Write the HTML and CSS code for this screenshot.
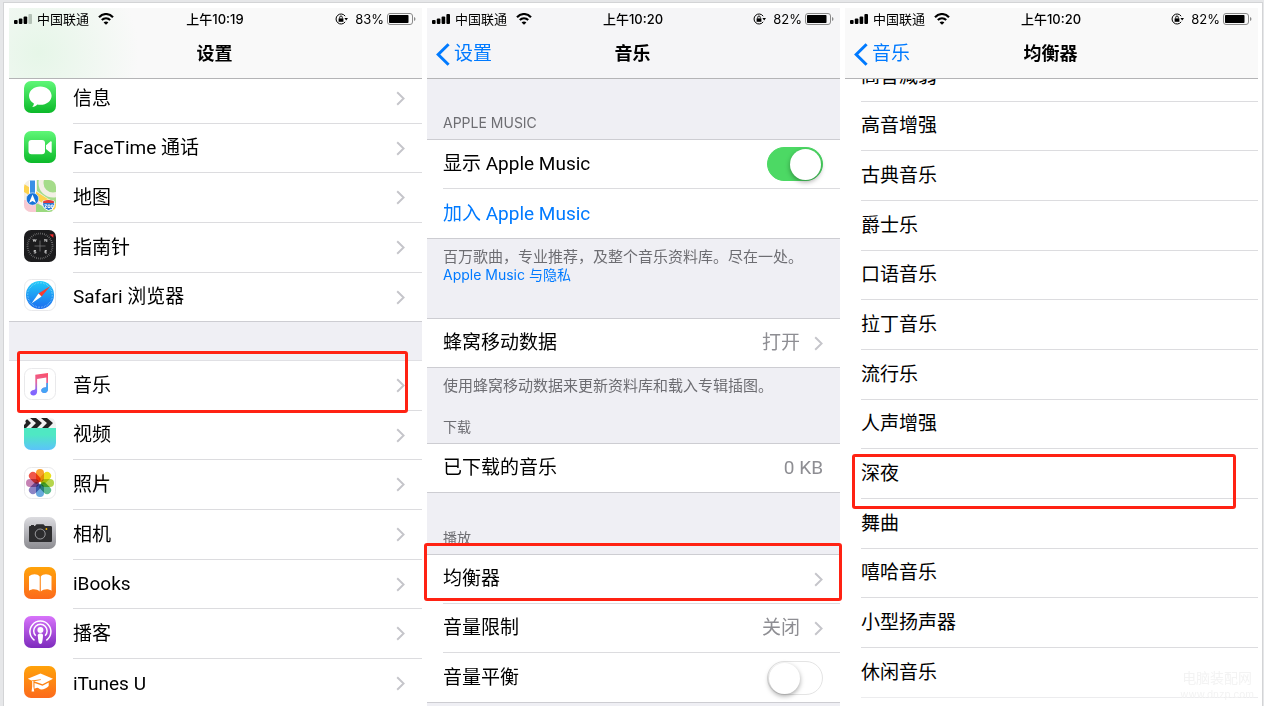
FILE: index.html
```html
<!DOCTYPE html>
<html lang="zh-CN">

<head>
    <meta charset="UTF-8">
    <meta name="viewport" content="width=device-width, initial-scale=1.0">
    <title>设置 - 音乐 - 均衡器</title>
    <link rel="stylesheet" href="styles.css">
</head>

<body>
    <!-- Shared icons -->
    <svg class="sprite" width="0" height="0" aria-hidden="true">
        <defs>
            <linearGradient id="green" x1="0" y1="0" x2="0" y2="1"><stop offset="0" stop-color="#5ff777"/><stop offset="1" stop-color="#0bb929"/></linearGradient>
            <linearGradient id="orange" x1="0" y1="0" x2="0" y2="1"><stop offset="0" stop-color="#ffa30a"/><stop offset="1" stop-color="#fc6a1c"/></linearGradient>
            <linearGradient id="purple" x1="0" y1="0" x2="0" y2="1"><stop offset="0" stop-color="#d873fb"/><stop offset="1" stop-color="#7d2bbd"/></linearGradient>
            <linearGradient id="blue" x1="0" y1="0" x2="0" y2="1"><stop offset="0" stop-color="#1fcbf8"/><stop offset="1" stop-color="#1d6cf0"/></linearGradient>
            <linearGradient id="aqua" x1="0" y1="0" x2="0" y2="1"><stop offset="0.3" stop-color="#4fe8c3"/><stop offset="1" stop-color="#5bc3fa"/></linearGradient>
            <linearGradient id="silver" x1="0" y1="0" x2="0" y2="1"><stop offset="0" stop-color="#dcdce0"/><stop offset="1" stop-color="#8b8b90"/></linearGradient>
            <linearGradient id="note" x1="0.7" y1="0" x2="0.5" y2="1"><stop offset="0" stop-color="#fb4f6b"/><stop offset="0.45" stop-color="#e5679c"/><stop offset="0.8" stop-color="#8a6bfa"/><stop offset="1" stop-color="#7f63ff"/></linearGradient>
            <clipPath id="tile"><rect width="32" height="32" rx="7"/></clipPath>
        </defs>
        <symbol id="chevron" viewBox="0 0 9 15"><path d="M1.2 1.2 7.6 7.5 1.2 13.8" fill="none" stroke="#c5c5ca" stroke-width="1.9"/></symbol>
        <symbol id="back" viewBox="0 0 14 23"><path d="M12.6 1.2 2.2 11.5 12.6 21.8" fill="none" stroke="#007aff" stroke-width="3"/></symbol>
        <symbol id="signal" viewBox="0 0 18 10"><rect y="6" width="3.6" height="4" rx="1"/><rect x="4.8" y="4.4" width="3.6" height="5.6" rx="1"/><rect x="9.6" y="2.4" width="3.6" height="7.6" rx="1"/></symbol>
        <symbol id="wifi" viewBox="0 0 16 12"><g fill="none" stroke="#000" stroke-width="2.1"><path d="M1 4.3C5-.1 11-.1 15 4.3"/><path d="M3.8 7.1c2.4-2.5 6-2.5 8.4 0"/></g><path d="M8 11.8 5.6 9.4c1.3-1.3 3.5-1.3 4.8 0z"/></symbol>
        <symbol id="lock" viewBox="0 0 13 12"><path d="M10.2 3.2A5 5 0 1 0 10.2 8.8" fill="none" stroke="#000"/><path d="M9.4 5h3.6l-1.8 2.600z"/><path d="M3.6 5.400h4.800v3.400H3.6z"/><path d="M4.700 5.600V4.300a1.300 1.300 0 0 1 2.600 0v1.300" fill="none" stroke="#000" stroke-width="0.9"/></symbol>
        <symbol id="battery" viewBox="0 0 29 12"><rect x="0.5" y="0.5" width="25" height="11" rx="2.5" fill="none" stroke="#8a8a8a"/><rect x="2" y="2" width="19.5" height="8" rx="0.8"/><path d="M27 4v4c2-.8 2-3.200 0-4z" fill="#8a8a8a"/></symbol>
    </svg>

    <main class="frame">
        <!-- Settings -->
        <section class="phone">
            <header class="top top-settings">
                <div class="status">
                    <div class="status-left">
                        <svg class="signal" width="18" height="10"><use href="#signal"/><rect x="14.400" width="3.600" height="10" rx="1" fill="#b5c2b7"/></svg>
                        <span class="carrier">中国联通</span>
                        <svg width="16" height="12"><use href="#wifi"/></svg>
                    </div>
                    <time class="clock">上午10:19</time>
                    <div class="status-right">
                        <svg class="lock" width="13" height="12"><use href="#lock"/></svg>
                        <span>83%</span>
                        <svg width="29" height="12"><use href="#battery"/></svg>
                    </div>
                </div>
                <div class="nav">
                    <span></span>
                    <h1>设置</h1>
                </div>
            </header>
            <div class="screen">
                <div class="scroll scroll-settings">
                    <div class="list icons">
                        <a class="row" href="#">
                            <svg class="app" width="32" height="32" viewBox="0 0 32 32"><rect width="32" height="32" rx="7" fill="url(#green)"/><path d="M16.300 5.400C10 5.400 5 9.500 5 14.700c0 3.200 1.900 6 4.900 7.700-.1 1.400-.8 2.500-1.700 3.500 2.100 0 3.800-.8 5.100-2.300 8 1.400 14.300-3.100 14.300-8.900 0-5.200-5-9.300-11.300-9.300z" fill="#fff"/></svg>
                            <span class="cell">信息 <svg class="chevron"><use href="#chevron"/></svg></span>
                        </a>
                        <a class="row" href="#">
                            <svg class="app" width="32" height="32" viewBox="0 0 32 32"><rect width="32" height="32" rx="7" fill="url(#green)"/><rect x="4.500" y="9" width="16.500" height="14.200" rx="3" fill="#fff"/><path d="M22 14.200 26.300 10.600c.7-.5 1.400-.3 1.400.6v9.800c0 .9-.7 1.100-1.400.6L22 18z" fill="#fff"/></svg>
                            <span class="cell">FaceTime 通话 <svg class="chevron"><use href="#chevron"/></svg></span>
                        </a>
                        <a class="row" href="#">
                            <svg class="app" width="32" height="32" viewBox="0 0 32 32">
                                <g clip-path="url(#tile)">
                                    <rect width="32" height="32" fill="#f3efe6"/>
                                    <path d="M13 0h19v24L13 11z" fill="#a5dc8a"/>
                                    <circle cx="29" cy="3" r="12" fill="none" stroke="#f3efe6" stroke-width="5"/>
                                    <path d="M0 20h14l4 12H0z" fill="#f8c9d2"/>
                                    <path d="M12 23 32 32H12z" fill="#9ad97f"/>
                                    <path d="M0 4 32 24v7L0 12z" fill="#fdd34e"/>
                                    <path d="M5.500 0h6v20h-6z" fill="#3a90e6" stroke="#fff"/>
                                    <circle cx="8.500" cy="19" r="6.200" fill="#1673d9" stroke="#fff" stroke-width="0.600"/>
                                    <path d="M8.500 14.500 12 23l-3.500-2L5 23z" fill="#fff"/>
                                    <path d="M19 21q5-2 11 0 2 8-5.500 9.500Q17 28 19 21z" fill="#2778d4" stroke="#fff"/>
                                    <path d="M19.400 21q5-2 10.300 0l.2 2H19.200z" fill="#e23b3b"/>
                                    <path d="M20.500 24.800h2.300l-2 2.600h2M24 25h2v2.500h-2zM27.300 25h1.800v2.500h-1.800z" fill="none" stroke="#fff" stroke-width="0.900"/>
                                </g>
                            </svg>
                            <span class="cell">地图 <svg class="chevron"><use href="#chevron"/></svg></span>
                        </a>
                        <a class="row" href="#">
                            <svg class="app" width="32" height="32" viewBox="0 0 32 32"><rect width="32" height="32" rx="7" fill="#1c1c1e"/><circle cx="16" cy="16" r="12.500" fill="none" stroke="#9a9a9a" stroke-width="1.800" stroke-dasharray="0.500 1.400"/><path d="M16 10.500v11M10.500 16h11" stroke="#777" stroke-width="0.800"/><path d="m25.500 4.500 4-.2-.2 3.500z" fill="#fa2d2d"/><g fill="none" stroke="#ddd" stroke-width="0.800"><path d="m9 9 .8 2.500.8-2 .8 2 .8-2.500M20.800 11.700V9l2 2.700V9M12 20.500h-2v1.200h1.800V23h-2M22.800 20.500H21V23h1.900M21 21.700h1.600"/></g></svg>
                            <span class="cell">指南针 <svg class="chevron"><use href="#chevron"/></svg></span>
                        </a>
                        <a class="row" href="#">
                            <svg class="app" width="32" height="32" viewBox="0 0 32 32"><rect x="0.500" y="0.500" width="31" height="31" rx="7" fill="#fff" stroke="#e9e9eb"/><circle cx="16" cy="16" r="14" fill="url(#blue)"/><circle cx="16" cy="16" r="12.300" fill="none" stroke="#a9dcfb" stroke-width="1.400" stroke-dasharray="0.400 1.200"/><path d="m26.500 7-12 7.500 3 3z" fill="#fb3b30"/><path d="m7.500 24.500 7-10 3 3z" fill="#fff"/></svg>
                            <span class="cell">Safari 浏览器 <svg class="chevron"><use href="#chevron"/></svg></span>
                        </a>
                    </div>
                    <div class="list icons spaced">
                        <a class="row" href="#">
                            <svg class="app" width="32" height="32" viewBox="0 0 32 32"><rect x="0.500" y="0.500" width="31" height="31" rx="7" fill="#fff" stroke="#e9e9eb"/><path d="M11.300 6.800 24 5v16.300c0 2.200-1.600 3.700-3.700 3.700-1.800 0-3-1-3-2.500 0-1.800 1.500-2.600 3.300-2.900 1.200-.2 1.700-.5 1.700-1.300V9.600l-9.200 1.500v12.600c0 2.200-1.700 3.700-3.700 3.700-1.900 0-3.100-1-3.100-2.600 0-1.800 1.600-2.600 3.300-2.900 1.100-.2 1.700-.5 1.700-1.300z" fill="url(#note)"/><path d="M24 15v6.300c0 2.200-1.600 3.700-3.700 3.700-1.800 0-3-1-3-2.500 0-1.800 1.500-2.600 3.300-2.900 1.200-.2 1.700-.5 1.700-1.300V15z" fill="#44a5f5"/></svg>
                            <span class="cell">音乐 <svg class="chevron"><use href="#chevron"/></svg></span>
                        </a>
                        <a class="row" href="#">
                            <svg class="app" width="32" height="32" viewBox="0 0 32 32">
                                <path d="M0 10h32v15a7 7 0 0 1-7 7H7a7 7 0 0 1-7-7z" fill="url(#aqua)"/>
                                <g clip-path="url(#tile)">
                                    <path d="M0 0h32v10H0z" fill="#f2f2f2"/>
                                    <path d="M0 0h2l5 5-5 5H-3l5-5zM6 0h6l6 5-5 5H7l5-5zM17 0h6l6 5-5 5h-6l5-5zM28 0h4v3z" fill="#222"/>
                                </g>
                            </svg>
                            <span class="cell">视频 <svg class="chevron"><use href="#chevron"/></svg></span>
                        </a>
                        <a class="row" href="#">
                            <svg class="app" width="32" height="32" viewBox="0 0 32 32">
                                <rect x="0.500" y="0.500" width="31" height="31" rx="7" fill="#fff" stroke="#e9e9eb"/>
                                <g class="petals">
                                    <rect x="12" y="2" width="8" height="13" rx="4" fill="#f9a12e"/>
                                    <rect x="12" y="2" width="8" height="13" rx="4" fill="#ebdf1e" transform="rotate(45 16 16)"/>
                                    <rect x="12" y="2" width="8" height="13" rx="4" fill="#b5d54c" transform="rotate(90 16 16)"/>
                                    <rect x="12" y="2" width="8" height="13" rx="4" fill="#5fbc90" transform="rotate(135 16 16)"/>
                                    <rect x="12" y="2" width="8" height="13" rx="4" fill="#6aa9dd" transform="rotate(180 16 16)"/>
                                    <rect x="12" y="2" width="8" height="13" rx="4" fill="#8c84c4" transform="rotate(225 16 16)"/>
                                    <rect x="12" y="2" width="8" height="13" rx="4" fill="#c581b3" transform="rotate(270 16 16)"/>
                                    <rect x="12" y="2" width="8" height="13" rx="4" fill="#f0564a" transform="rotate(315 16 16)"/>
                                </g>
                            </svg>
                            <span class="cell">照片 <svg class="chevron"><use href="#chevron"/></svg></span>
                        </a>
                        <a class="row" href="#">
                            <svg class="app" width="32" height="32" viewBox="0 0 32 32"><rect width="32" height="32" rx="7" fill="url(#silver)"/><path d="M6 9h5l1.500-1.800h7L21 9h5.500c1 0 1.500.5 1.500 1.500v13c0 1-.5 1.500-1.500 1.500h-20C5.500 25 5 24.500 5 23.500v-13C5 9.500 5.300 9 6 9z" fill="#2d2d2f"/><path d="M7 8h3v1H7z" fill="#2d2d2f"/><circle cx="16.200" cy="17" r="5" fill="none" stroke="#a5a5a8" stroke-width="0.900"/><circle cx="22.400" cy="12" r="0.900" fill="#fcb900"/></svg>
                            <span class="cell">相机 <svg class="chevron"><use href="#chevron"/></svg></span>
                        </a>
                        <a class="row" href="#">
                            <svg class="app" width="32" height="32" viewBox="0 0 32 32"><rect width="32" height="32" rx="7" fill="url(#orange)"/><path d="M15.700 9.500C13.500 6.500 8 6.500 5 9.300v14.500c3-2.200 8-2 10.700.8zM16.800 9.500c2.200-3 7.700-3 10.700-.2v14.500c-3-2.200-8-2-10.700.8z" fill="#fff"/></svg>
                            <span class="cell">iBooks <svg class="chevron"><use href="#chevron"/></svg></span>
                        </a>
                        <a class="row" href="#">
                            <svg class="app" width="32" height="32" viewBox="0 0 32 32"><rect width="32" height="32" rx="7" fill="url(#purple)"/><g fill="none" stroke="#fff" stroke-width="1.500"><path d="M10.500 24.300a10.500 10.500 0 1 1 11.800 0"/><path d="M11.700 19.800a6.700 6.700 0 1 1 9.400 0"/></g><circle cx="16.400" cy="14" r="3" fill="#fff"/><path d="M13.800 19.300c0-1.300 1.200-1.800 2.600-1.800s2.600.5 2.600 1.800c0 2-.4 5-.9 7.300-.3 1-.9 1.400-1.700 1.400s-1.400-.4-1.700-1.400c-.5-2.300-.9-5.300-.9-7.300z" fill="#fff"/></svg>
                            <span class="cell">播客 <svg class="chevron"><use href="#chevron"/></svg></span>
                        </a>
                        <a class="row" href="#">
                            <svg class="app" width="32" height="32" viewBox="0 0 32 32"><rect width="32" height="32" rx="7" fill="url(#orange)"/><path d="m16.500 7.500 12.500 5.300-10.500 5.500-8.500-3 7-1.300-.3-.7-9.200 1.300-3.700-1.800z" fill="#fff"/><path d="m10.500 17 8 2.800 6.200-3.300v3.400c-3 3.400-8 4.400-9.700 2.600-1.200-1.200-2.500-.6-4.500.2z" fill="#fff"/><path d="M8.200 15h1.200v5.500l.8 5H7.600l.6-5z" fill="#fff"/></svg>
                            <span class="cell">iTunes U <svg class="chevron"><use href="#chevron"/></svg></span>
                        </a>
                    </div>
                </div>
            </div>
            <div class="mark mark-music"></div>
        </section>

        <!-- Music -->
        <section class="phone">
            <header class="top top-music">
                <div class="status">
                    <div class="status-left">
                        <svg class="signal" width="18" height="10"><use href="#signal"/><rect x="14.400" width="3.600" height="10" rx="1"/></svg>
                        <span class="carrier">中国联通</span>
                        <svg width="16" height="12"><use href="#wifi"/></svg>
                    </div>
                    <time class="clock">上午10:20</time>
                    <div class="status-right">
                        <svg class="lock" width="13" height="12"><use href="#lock"/></svg>
                        <span>82%</span>
                        <svg width="29" height="12"><use href="#battery"/></svg>
                    </div>
                </div>
                <div class="nav">
                    <a class="back" href="#"><svg width="14" height="23"><use href="#back"/></svg>设置</a>
                    <h1>音乐</h1>
                </div>
            </header>
            <div class="screen">
                <h2 class="label">APPLE MUSIC</h2>
                <div class="list compact">
                    <div class="row">
                        <div class="cell">
                            <label for="show-music">显示 Apple Music</label>
                            <input class="switch" type="checkbox" id="show-music" checked>
                        </div>
                    </div>
                    <a class="row join" href="#"><span class="cell">加入 Apple Music</span></a>
                </div>
                <p class="footnote">百万歌曲，专业推荐，及整个音乐资料库。尽在一处。<br><a href="#">Apple Music 与隐私</a></p>
                <div class="list compact single">
                    <a class="row" href="#"><span class="cell">蜂窝移动数据 <span class="value">打开</span><svg class="chevron"><use href="#chevron"/></svg></span></a>
                </div>
                <p class="footnote">使用蜂窝移动数据来更新资料库和载入专辑插图。</p>
                <h2 class="label">下载</h2>
                <div class="list compact">
                    <div class="row"><span class="cell">已下载的音乐 <span class="value">0 KB</span></span></div>
                </div>
                <h2 class="label">播放</h2>
                <div class="list compact">
                    <a class="row" href="#"><span class="cell">均衡器 <svg class="chevron"><use href="#chevron"/></svg></span></a>
                    <a class="row" href="#"><span class="cell">音量限制 <span class="value">关闭</span><svg class="chevron"><use href="#chevron"/></svg></span></a>
                    <div class="row">
                        <div class="cell">
                            <label for="sound-check">音量平衡</label>
                            <input class="switch" type="checkbox" id="sound-check">
                        </div>
                    </div>
                </div>
            </div>
            <div class="mark mark-eq"></div>
        </section>

        <!-- Equalizer -->
        <section class="phone">
            <header class="top">
                <div class="status">
                    <div class="status-left">
                        <svg class="signal" width="18" height="10"><use href="#signal"/><rect x="14.400" width="3.600" height="10" rx="1"/></svg>
                        <span class="carrier">中国联通</span>
                        <svg width="16" height="12"><use href="#wifi"/></svg>
                    </div>
                    <time class="clock">上午10:20</time>
                    <div class="status-right">
                        <svg class="lock" width="13" height="12"><use href="#lock"/></svg>
                        <span>82%</span>
                        <svg width="29" height="12"><use href="#battery"/></svg>
                    </div>
                </div>
                <div class="nav">
                    <a class="back" href="#"><svg width="14" height="23"><use href="#back"/></svg>音乐</a>
                    <h1>均衡器</h1>
                </div>
            </header>
            <div class="screen screen-white">
                <div class="scroll scroll-eq">
                    <div class="list">
                        <a class="row" href="#"><span class="cell">高音减弱</span></a>
                        <a class="row" href="#"><span class="cell">高音增强</span></a>
                        <a class="row" href="#"><span class="cell">古典音乐</span></a>
                        <a class="row" href="#"><span class="cell">爵士乐</span></a>
                        <a class="row" href="#"><span class="cell">口语音乐</span></a>
                        <a class="row" href="#"><span class="cell">拉丁音乐</span></a>
                        <a class="row" href="#"><span class="cell">流行乐</span></a>
                        <a class="row" href="#"><span class="cell">人声增强</span></a>
                        <a class="row" href="#"><span class="cell">深夜</span></a>
                        <a class="row" href="#"><span class="cell">舞曲</span></a>
                        <a class="row" href="#"><span class="cell">嘻哈音乐</span></a>
                        <a class="row" href="#"><span class="cell">小型扬声器</span></a>
                        <a class="row inset" href="#"><span class="cell">休闲音乐</span></a>
                    </div>
                </div>
            </div>
            <div class="mark mark-night"></div>
            <div class="watermark">电脑装配网<span>www.dnzp.com</span></div>
        </section>
    </main>
</body>

</html>
```

FILE: styles.css
```css
* {
    box-sizing: border-box;
}

body {
    margin: 0;
    height: 100vh;
    overflow: hidden;
    padding: 2px 1px 0 3px;
    background-color: #e6e7e9;
    color: #000;
    font-family: Inter, "Noto Sans CJK SC", sans-serif;
    font-size: 19px;
    line-height: 24px;
}

a {
    color: inherit;
    text-decoration: none;
}

h1,
h2,
p {
    margin: 0;
    font-weight: normal;
}

svg {
    flex: none;
}

.sprite {
    position: absolute;
}

.frame {
    display: flex;
    gap: 5px;
    height: 100%;
    padding: 5px 4px 0 5px;
    background-color: #fff;
    border: 1px solid #d3d4d6;
    border-bottom: none;
}

.phone {
    position: relative;
    display: flex;
    flex: 1;
    flex-direction: column;
    min-width: 0;
}

/* Status bar and title */
.top {
    background-color: #f9f9f9;
    border-bottom: 1px solid #b4b4b6;
}

.top-settings {
    background-image: radial-gradient(circle at 30px 45px, #e6f6e8, #f9f9f9 100px);
}

.top-music {
    background-color: #f5f5f7;
}

.status {
    display: grid;
    grid-template-columns: 1fr auto 1fr;
    align-items: center;
    height: 22px;
    padding: 0 6px 0 5px;
    font-size: 13px;
    line-height: 20px;
}

.status-left,
.status-right {
    display: flex;
    align-items: center;
}

.status-right {
    justify-content: flex-end;
    gap: 3px;
}

.carrier {
    margin: 0 9px 0 5px;
}

.lock {
    margin-right: 4px;
}

.clock {
    font-weight: 500;
}

.nav {
    display: grid;
    grid-template-columns: 1fr auto 1fr;
    align-items: center;
    height: 48px;
    padding: 0 11px 0 9px;
}

.nav h1 {
    font-size: 18px;
    font-weight: 600;
}

.back {
    display: flex;
    align-items: center;
    gap: 4px;
    color: #007aff;
}

/* Lists */
.screen {
    flex: 1;
    min-height: 0;
    overflow: hidden;
    background-color: #efeff4;
}

.screen-white {
    background-color: #fff;
}

.scroll-settings {
    margin-top: -5px;
}

.scroll-eq {
    margin-top: -27px;
}

.list {
    background-color: #fff;
    font-family: Roboto, "Noto Sans CJK SC", sans-serif;
}

.spaced {
    margin-top: 38px;
    border-top: 1px solid #e0e0e4;
}

.row {
    display: flex;
    align-items: center;
    height: 50px;
    padding-left: 16px;
}

.row:nth-child(3n+2) {
    height: 49px;
}

.icons .row {
    gap: 17px;
    padding-left: 15px;
}

.app {
    margin-bottom: 4px;
}

.petals rect {
    mix-blend-mode: multiply;
}

.cell {
    display: flex;
    flex: 1;
    align-items: center;
    justify-content: space-between;
    height: 100%;
    padding-right: 17px;
    border-bottom: 1px solid #dcdcdf;
}

.row:last-child {
    border-bottom: 1px solid #cdcdd2;
}

.row:last-child .cell {
    border-bottom: none;
}

.row.inset {
    border-bottom: none;
}

.row.inset .cell {
    border-bottom: 1px solid #ececee;
}

.compact {
    border-top: 1px solid #cdcdd2;
}

.compact .row {
    height: 49px;
}

.compact .row + .row:last-child {
    height: 50px;
}

.single {
    margin-top: 34px;
}

.chevron {
    width: 9px;
    height: 15px;
}

.value {
    margin-left: auto;
    color: #8e8e93;
}

.value + .chevron {
    margin-left: 14px;
}

.join {
    color: #007aff;
}

.label,
.footnote {
    padding: 0 16px;
    color: #6d6d72;
    font-size: 14px;
    line-height: 18px;
}

.label {
    margin: 35px 0 7px;
}

.footnote {
    padding-top: 9px;
    font-size: 15px;
}

.footnote a {
    color: #007aff;
    font-size: 14px;
}

.footnote + .label {
    margin-top: 23px;
}

.list + .label {
    margin-top: 36px;
}

/* Toggle */
.switch {
    appearance: none;
    display: flex;
    width: 56px;
    height: 34px;
    margin: 0;
    padding: 1px;
    border: 1px solid #e4e4e4;
    border-radius: 17px;
    background-color: #fff;
    cursor: pointer;
}

.switch::before {
    content: "";
    width: 31px;
    height: 31px;
    border-radius: 50%;
    background-color: #fff;
    box-shadow: 0 2px 5px rgba(0, 0, 0, 0.35);
}

.switch:checked {
    justify-content: flex-end;
    border-color: #4cd964;
    background-color: #4cd964;
}

/* Red highlight boxes */
.mark {
    position: absolute;
    border: 3px solid #ff2213;
    border-radius: 3px;
    pointer-events: none;
}

.mark-music {
    top: 343px;
    left: 8px;
    right: 14px;
    height: 62px;
}

.mark-eq {
    top: 535px;
    left: -3px;
    right: -2px;
    height: 58px;
}

.mark-night {
    top: 446px;
    left: 7px;
    right: 22px;
    height: 55px;
}

.watermark {
    position: absolute;
    right: 4px;
    bottom: 5px;
    color: #f3f3f3;
    font-size: 14px;
    line-height: 18px;
    text-align: center;
}

.watermark span {
    display: block;
    font-size: 10px;
    line-height: 14px;
}
```
